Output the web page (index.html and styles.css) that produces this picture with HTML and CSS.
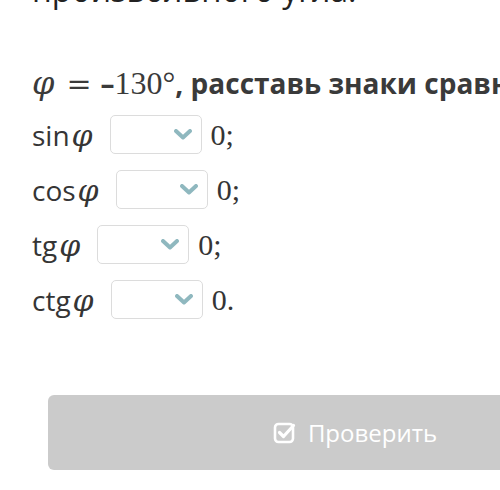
FILE: index.html
```html
<!DOCTYPE html>
<html lang="ru">
<head>
  <meta charset="UTF-8" />
  <meta name="viewport" content="width=device-width, initial-scale=1.0" />
  <title>Знаки тригонометрических функций</title>
  <link rel="stylesheet" href="styles.css">
</head>
<body>
  <div class="task">
    <p class="intro">произвольного угла.</p>
    <h2 class="question"><span class="math">φ</span><span class="rel">=</span>–<span class="num">130°</span>, расставь знаки сравнения:</h2>

    <div class="row">
      <span class="label">sin<span class="math">φ</span></span>
      <div class="select"><svg class="chevron" width="18" height="11" viewBox="0 0 18 11"><polyline points="2,2 9,8.5 16,2" fill="none" stroke="#8fb8bf" stroke-width="4" stroke-linecap="round" stroke-linejoin="round"/></svg></div>
      <span class="num">0;</span>
    </div>
    <div class="row">
      <span class="label">cos<span class="math">φ</span></span>
      <div class="select"><svg class="chevron" width="18" height="11" viewBox="0 0 18 11"><polyline points="2,2 9,8.5 16,2" fill="none" stroke="#8fb8bf" stroke-width="4" stroke-linecap="round" stroke-linejoin="round"/></svg></div>
      <span class="num">0;</span>
    </div>
    <div class="row">
      <span class="label">tg<span class="math">φ</span></span>
      <div class="select"><svg class="chevron" width="18" height="11" viewBox="0 0 18 11"><polyline points="2,2 9,8.5 16,2" fill="none" stroke="#8fb8bf" stroke-width="4" stroke-linecap="round" stroke-linejoin="round"/></svg></div>
      <span class="num">0;</span>
    </div>
    <div class="row">
      <span class="label">ctg<span class="math">φ</span></span>
      <div class="select"><svg class="chevron" width="18" height="11" viewBox="0 0 18 11"><polyline points="2,2 9,8.5 16,2" fill="none" stroke="#8fb8bf" stroke-width="4" stroke-linecap="round" stroke-linejoin="round"/></svg></div>
      <span class="num">0.</span>
    </div>

    <button class="check">
      <svg width="23" height="23" viewBox="0 0 23 23">
        <rect x="2" y="3" width="18" height="18" rx="3.5" fill="none" stroke="#fff" stroke-width="2.6"/>
        <path d="M6.5 11.5 l4 4 l10 -11" fill="none" stroke="#fff" stroke-width="3.2" stroke-linecap="round" stroke-linejoin="round"/>
      </svg>
      Проверить
    </button>
  </div>
</body>
</html>
```

FILE: styles.css
```css
html, body {
  overflow: hidden;
}
body {
  margin: 0;
  background-color: #fff;
  color: #353535;
  font-family: 'Open Sans', sans-serif;
}
.task {
  width: 640px;
  padding-left: 32px;
}
.intro {
  margin: -32px 0 0;
  font-size: 32px;
  line-height: 44px;
  color: #222;
  white-space: nowrap;
}
.question {
  margin: 53px 0 5px;
  font-size: 28px;
  line-height: 36px;
  font-weight: bold;
  color: #3a3a3a;
  white-space: nowrap;
}
.question .math,
.question .num {
  font-size: 32px;
}
.rel {
  font-family: 'DejaVu Serif', serif;
  font-weight: normal;
  font-size: 30px;
  margin: 0 9px 0 12px;
}
.math {
  font-family: 'DejaVu Serif', serif;
  font-style: italic;
  font-weight: normal;
  font-size: 30px;
}
.num {
  font-family: 'Liberation Serif', serif;
  font-weight: normal;
  font-size: 30px;
}
.row {
  display: flex;
  align-items: center;
  height: 55px;
  font-size: 28px;
}
.label {
  margin-right: 17px;
}
.label .math {
  margin-left: 2px;
}
.select {
  width: 92px;
  height: 39px;
  border: 1px solid #dcdcdc;
  border-radius: 5px;
  display: flex;
  align-items: center;
  justify-content: flex-end;
  padding-right: 9px;
  box-sizing: border-box;
  margin-right: 9px;
}
.check {
  margin-top: 68px;
  margin-left: 16px;
  width: 614px;
  height: 75px;
  border: none;
  border-radius: 6px;
  background-color: #cbcbcb;
  color: #fff;
  font-family: 'Open Sans', sans-serif;
  font-size: 24px;
  display: flex;
  align-items: center;
  justify-content: center;
  gap: 12px;
}
```
